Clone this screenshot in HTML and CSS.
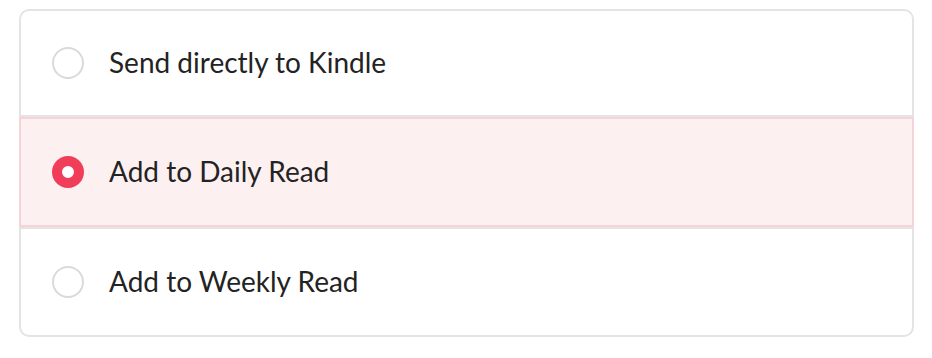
FILE: index.html
```html
<!DOCTYPE html>
<html lang="en">
<head>
    <meta charset="UTF-8">
    <meta name="viewport" content="width=device-width, initial-scale=1.0">
    <title>Delivery options</title>
    <link rel="stylesheet" href="styles.css">
</head>
<body>
    <div class="options">
        <label class="option first">
            <span class="radio"></span>
            <span class="option-label">Send directly to Kindle</span>
        </label>
        <label class="option selected">
            <span class="radio"></span>
            <span class="option-label">Add to Daily Read</span>
        </label>
        <label class="option last">
            <span class="radio"></span>
            <span class="option-label">Add to Weekly Read</span>
        </label>
    </div>
</body>
</html>
```

FILE: styles.css
```css
* {
    margin: 0;
    padding: 0;
    box-sizing: border-box;
}
:root {
    --border-color: #e4e4e4;
    --accent-color: #ef3d5a;
    --selected-bg: #fdf0f1;
    --selected-border: #f6d2d9;
    --text-color: #232323;
}
body {
    font-family: Lato, "Open Sans", sans-serif;
    background-color: #fff;
    color: var(--text-color);
    padding: 9px 18px 0 19px;
}
.options {
    border: 2px solid var(--border-color);
    border-radius: 10px;
}
.option {
    display: flex;
    align-items: center;
    gap: 25px;
    height: 110px;
    padding-left: 31px;
    cursor: pointer;
}
.option + .option {
    border-top: 2px solid var(--border-color);
}
.option.first {
    height: 104px;
}
.option.last {
    height: 108px;
}
.radio {
    width: 32px;
    height: 32px;
    border-radius: 50%;
    border: 2px solid #dadada;
    flex-shrink: 0;
}
.option-label {
    font-size: 28px;
    line-height: 1;
    padding-bottom: 2px;
}
.option.selected {
    height: 112px;
    margin: 0 -2px;
    padding-left: 33px;
    background-color: var(--selected-bg);
    box-shadow: inset 0 0 0 2px var(--selected-border);
    background-clip: padding-box;
}
.option.selected .radio {
    border: 10.5px solid var(--accent-color);
    background-color: #fff;
}
```
